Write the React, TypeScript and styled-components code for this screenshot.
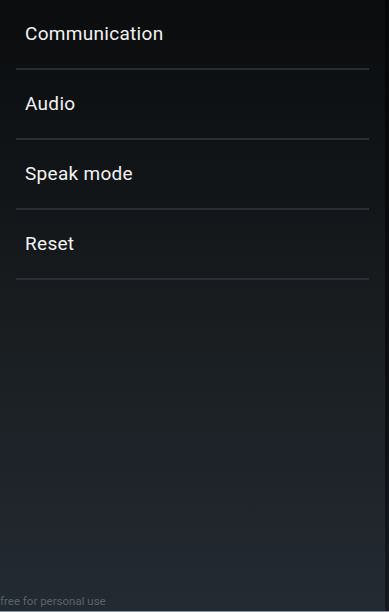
import React from "react";
import styled, { createGlobalStyle } from "styled-components";

const Global = createGlobalStyle`
  html, body { margin: 0; padding: 0; background: #0b0d10; }
  * { box-sizing: border-box; }
`;

const Screen = styled.div`
  position: relative;
  width: 389px;
  height: 612px;
  overflow: hidden;
  display: flex;
  background: linear-gradient(180deg, #0a0c0e 0%, #121517 30%, #1a1e21 55%, #232a32 100%);
  font-family: Roboto, "Noto Sans", sans-serif;
  border-bottom: 1px solid #8a99a8;
`;

const Main = styled.div`
  flex: 1;
  display: flex;
  flex-direction: column;
  padding: 0 16px 0 16px;
`;

const EdgeStripe = styled.div`
  width: 4px;
  background: linear-gradient(180deg, #050607 0%, #0b0d10 60%, #15191e 100%);
`;

const List = styled.ul`
  list-style: none;
  margin: 0;
  padding: 0;
`;

const Row = styled.li`
  height: 70px;
  display: flex;
  align-items: center;
  padding: 0 0 2px 9px;
  border-bottom: 2px solid #2a2d31;
  color: #f2f2f2;
  font-size: 19px;
  letter-spacing: 0.3px;
`;

const Watermark = styled.div`
  position: absolute;
  left: 0;
  bottom: 3px;
  font-family: Roboto, sans-serif;
  font-size: 11.5px;
  color: #5a636c;
`;

const items = ["Communication", "Audio", "Speak mode", "Reset"];

export default function App() {
  return (
    <>
      <Global />
      <Screen>
        <Main>
          <List>
            {items.map((t) => (
              <Row key={t}>{t}</Row>
            ))}
          </List>
        </Main>
        <EdgeStripe />
        <Watermark>free for personal use</Watermark>
      </Screen>
    </>
  );
}
